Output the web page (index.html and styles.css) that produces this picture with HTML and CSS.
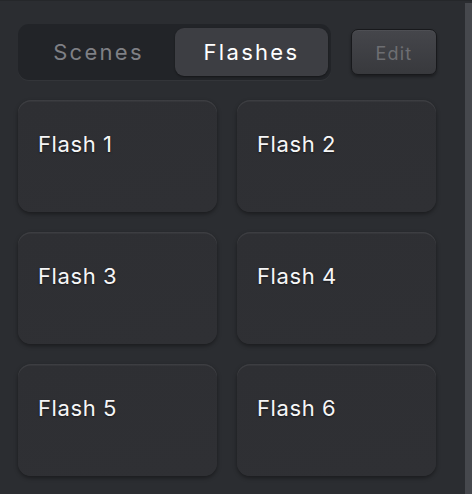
FILE: index.html
```html
<!DOCTYPE html>
<html>
<head>
<meta charset="utf-8">
<link rel="stylesheet" href="styles.css">
</head>
<body>
<div class="page">
  <main class="panel">
    <div class="toolbar">
      <div class="segmented">
        <div class="segment">Scenes</div>
        <div class="segment active">Flashes</div>
      </div>
      <button class="edit">Edit</button>
    </div>
    <div class="grid">
      <div class="card">Flash 1</div>
      <div class="card">Flash 2</div>
      <div class="card">Flash 3</div>
      <div class="card">Flash 4</div>
      <div class="card">Flash 5</div>
      <div class="card">Flash 6</div>
    </div>
  </main>
  <div class="scrollbar"></div>
</div>
</body>
</html>
```
FILE: styles.css
```css
html, body {
  margin: 0;
  padding: 0;
  background: #2b2d31;
  height: 100%;
}
body {
  font-family: Inter, "Noto Sans", "DejaVu Sans", sans-serif;
  overflow: hidden;
}
.page {
  display: flex;
  height: 494px;
  border-top: 1px solid #25272a;
  box-sizing: border-box;
}
.panel {
  flex: 1;
  padding: 23px 0 0 18px;
}
.scrollbar {
  width: 7px;
  margin-top: 2px;
  background: #46484d;
}
.toolbar {
  display: flex;
  align-items: center;
  gap: 20px;
}
.segmented {
  display: grid;
  grid-template-columns: 1fr 1fr;
  width: 313px;
  box-sizing: border-box;
  padding: 4px 3px 4px 4px;
  background: #222428;
  border-radius: 11px;
  box-shadow: 0 1px 0 rgba(255,255,255,0.04);
}
.segment {
  height: 48px;
  line-height: 48px;
  text-align: center;
  font-size: 22px;
  letter-spacing: 2.3px;
  color: #7f8085;
  border-radius: 9px;
}
.segment.active {
  background: #3d3e43;
  color: #ffffff;
  box-shadow: 0 1px 2px rgba(0,0,0,0.4);
}
.edit {
  width: 86px;
  height: 46px;
  margin-top: -1px;
  padding: 3px 0 0 0;
  border: 1px solid #18191c;
  border-radius: 7px;
  background: linear-gradient(#45464b, #38393d);
  box-shadow: inset 0 1px 0 rgba(255,255,255,0.05), 0 2px 3px rgba(0,0,0,0.35);
  color: #6d6e72;
  font-family: Inter, "Noto Sans", "DejaVu Sans", sans-serif;
  font-size: 18px;
  letter-spacing: 1.2px;
}
.grid {
  display: grid;
  grid-template-columns: 199px 199px;
  grid-auto-rows: 112px;
  gap: 20px;
  margin-top: 20px;
}
.card {
  box-sizing: border-box;
  padding: 31px 0 0 20px;
  border-radius: 13px;
  background: linear-gradient(170deg, #2e2f33, #2f3034);
  box-shadow: inset 0 1.5px 0 rgba(255,255,255,0.07), 0 2px 4px rgba(0,0,0,0.4);
  color: #f6f6f7;
  font-size: 22px;
  font-weight: 400;
  line-height: 26px;
  letter-spacing: 0.6px;
  text-shadow: 0 1px 2px rgba(0,0,0,0.5);
}
```
